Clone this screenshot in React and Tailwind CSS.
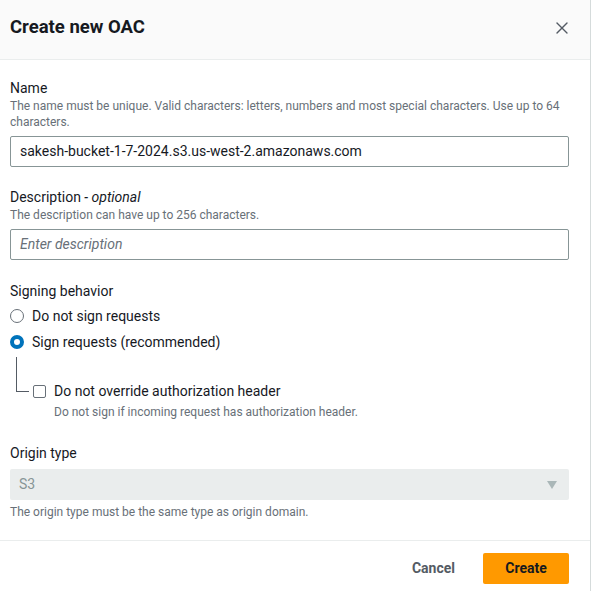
import { X } from "lucide-react";

/* ── Champ texte ── */
function Field({ label, optional, hint, children }) {
  return (
    <div>
      <p className="text-[14px] leading-[20px] text-[#16191f]">
        {label}
        {optional && <span className="italic"> - optional</span>}
      </p>
      {hint && <p className="text-[12px] leading-[16px] text-[#687078]">{hint}</p>}
      <div className="mt-[6px]">{children}</div>
    </div>
  );
}

function Radio({ checked, label }) {
  return (
    <label className="flex items-center gap-[8px] h-[26px]">
      {checked ? (
        <span className="w-[14px] h-[14px] rounded-full border-[4px] border-[#0073bb] bg-white" />
      ) : (
        <span className="w-[14px] h-[14px] rounded-full border-[1.5px] border-[#687078] bg-white" />
      )}
      <span className="text-[14px] text-[#16191f]">{label}</span>
    </label>
  );
}

export default function App() {
  return (
    <div
      className="w-[591px] h-[591px] bg-white border-r border-[#d5dbdb] flex flex-col"
      style={{ fontFamily: "Roboto, 'Noto Sans', sans-serif" }}
    >
      {/* En-tête */}
      <div className="h-[60px] shrink-0 bg-[#fafafa] border-b border-[#eaeded] flex items-center justify-between pl-[10px] pr-[18px] pb-[4px]">
        <h1 className="text-[18.5px] font-bold text-[#16191f]">Create new OAC</h1>
        <X size={20} strokeWidth={1.6} className="text-[#545b64]" />
      </div>

      {/* Corps */}
      <div className="flex-1 px-[10px] pr-[21px] pt-[18px]">
        <Field
          label="Name"
          hint="The name must be unique. Valid characters: letters, numbers and most special characters. Use up to 64 characters."
        >
          <div className="h-[31px] border border-[#879596] rounded-[2px] flex items-center px-[9px] text-[14px] text-[#16191f]">
            sakesh-bucket-1-7-2024.s3.us-west-2.amazonaws.com
          </div>
        </Field>

        <div className="mt-[20px]">
          <Field label="Description" optional hint="The description can have up to 256 characters.">
            <div className="h-[31px] border border-[#879596] rounded-[2px] flex items-center px-[9px] text-[14px] italic text-[#687078]">
              Enter description
            </div>
          </Field>
        </div>

        <div className="mt-[21px]">
          <p className="text-[14px] leading-[20px] text-[#16191f]">Signing behavior</p>
          <div className="mt-[2px]">
            <Radio label="Do not sign requests" />
            <Radio checked label="Sign requests (recommended)" />
          </div>
          <div className="flex">
            <div className="ml-[6px] w-[13px] h-[35px] border-l border-b border-[#545b64] mt-[2px]" />
            <div className="ml-[4px] mt-[26px]">
              <label className="flex items-center gap-[8px]">
                <span className="w-[13px] h-[13px] border border-[#687078] rounded-[2px] bg-white" />
                <span className="text-[14px] text-[#16191f]">Do not override authorization header</span>
              </label>
              <p className="ml-[21px] text-[12px] leading-[16px] text-[#687078] mt-[2px]">
                Do not sign if incoming request has authorization header.
              </p>
            </div>
          </div>
        </div>

        <div className="mt-[23px]">
          <p className="text-[14px] leading-[20px] text-[#16191f]">Origin type</p>
          <div className="mt-[6px] h-[31px] bg-[#eaeded] rounded-[2px] flex items-center justify-between px-[9px] pr-[12px]">
            <span className="text-[14px] text-[#879596]">S3</span>
            <svg width="10" height="8" viewBox="0 0 10 8">
              <path d="M0 0 L10 0 L5 8 Z" fill="#aab7b8" />
            </svg>
          </div>
          <p className="mt-[4px] text-[12px] leading-[16px] text-[#687078]">
            The origin type must be the same type as origin domain.
          </p>
        </div>
      </div>

      {/* Pied */}
      <div className="h-[51px] shrink-0 border-t border-[#eaeded] flex items-start justify-end gap-[8px] pr-[21px] pt-[12px]">
        <button className="h-[31px] px-[20px] text-[14px] font-bold text-[#545b64]">Cancel</button>
        <button className="h-[31px] w-[86px] rounded-[2px] bg-[#ff9900] text-[14px] font-bold text-[#16191f]">
          Create
        </button>
      </div>
    </div>
  );
}
